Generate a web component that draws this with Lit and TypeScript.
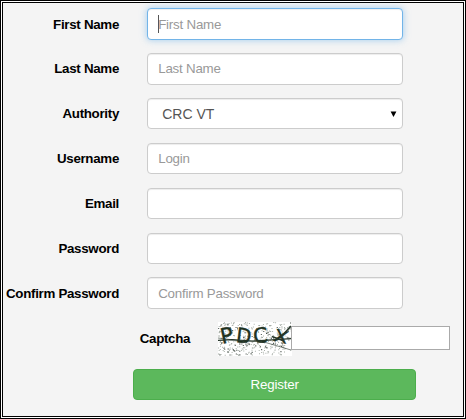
import { LitElement, html, svg, css } from "lit";
import { customElement, property } from "lit/decorators.js";
import { classMap } from "lit/directives/class-map.js";

interface Field {
  label: string;
  placeholder?: string;
  value?: string;
  focused?: boolean;
}

const FIELDS: Field[] = [
  { label: "First Name", placeholder: "First Name", focused: true },
  { label: "Last Name", placeholder: "Last Name" },
  { label: "Authority", value: "CRC VT" },
  { label: "Username", placeholder: "Login" },
  { label: "Email" },
  { label: "Password" },
  { label: "Confirm Password", placeholder: "Confirm Password" },
];

@customElement("captcha-image")
class CaptchaImage extends LitElement {
  static styles = css`
    :host { display: block; width: 74px; height: 34px; flex: none; }
    svg { display: block; }
    .letter { font: 20px "DejaVu Sans", sans-serif; fill: #20321f; stroke: #20321f; stroke-width: 0.4; }
    .line { fill: none; stroke: #26362a; }
  `;

  // Repeatable speckle, so the noise is the same on every render.
  private speckle(count: number, seed: number, size: number) {
    let s = seed;
    const next = () => (s = (s * 16807) % 2147483647) / 2147483647;
    next();
    let d = "";
    for (let i = 0; i < count; i++) {
      d += `M${(next() * 73).toFixed(1)} ${(next() * 33).toFixed(1)}h${size}v${size}h-${size}z`;
    }
    return d;
  }

  render() {
    return html`<svg width="74" height="34" viewBox="0 0 74 34">
      <rect width="74" height="34" fill="#fff"></rect>
      ${svg`<path d=${this.speckle(330, 9137, 1)} fill="#6f7b70" opacity=".6"></path>
      <path d=${this.speckle(80, 4421, 1.1)} fill="#253129" opacity=".8"></path>`}
      <text class="letter" transform="translate(4 22) rotate(-12) scale(1.06)">P</text>
      <text class="letter" transform="translate(17.4 20) rotate(7) scale(.98 1.02)">D</text>
      <text class="letter" transform="translate(35.8 21.2) rotate(-5) scale(1.04)">C</text>
      <text class="letter" transform="translate(54.5 18.6) rotate(14) scale(1.05 .85)">X</text>
      <path class="line" stroke-width="1.6" d="M54 14.5L66 19M62 16L73 4"></path>
      <path class="line" stroke-width="1.2" d="M0 18.4L14 17.6L34 19L46 18.4L73 16.6"></path>
      <path class="line" stroke-width=".8" d="M0 16L20 18.5L46 20L73 28" opacity=".75"></path>
    </svg>`;
  }
}

@customElement("form-row")
class FormRow extends LitElement {
  @property({ attribute: false }) field!: Field;

  static styles = css`
    :host { display: flex; align-items: center; height: 31.5px; }
    .label { width: 116px; margin-right: 27.6px; text-align: right; font-weight: bold; letter-spacing: -0.3px; color: #000; white-space: nowrap; flex: none; }
    .control {
      box-sizing: border-box; width: 256.4px; height: 100%; padding: 0 10.6px;
      display: flex; align-items: center; background: #fff; color: #999; letter-spacing: -0.22px;
      border: 1px solid #ccc; border-radius: 4px;
      box-shadow: inset 0 1px 1px rgba(0, 0, 0, 0.075);
    }
    .focused {
      border-color: #72b4e8;
      box-shadow: inset 0 1px 1px rgba(0, 0, 0, 0.075), 0 0 7px rgba(102, 175, 233, 0.6);
    }
    .select { font-size: 14px; letter-spacing: 0; color: #555; padding: 0 5px 0 14.6px; justify-content: space-between; }
    .caret { width: 1px; height: 18px; background: #555; margin-right: -1px; }
  `;

  render() {
    const f = this.field;
    return html`<div class="label">${f.label}</div>
      <div class=${classMap({ control: true, focused: !!f.focused, select: !!f.value })}>
        ${f.focused ? html`<span class="caret"></span>` : ""}
        <span>${f.value ?? f.placeholder ?? ""}</span>
        ${f.value
          ? html`<svg width="7" height="6" viewBox="0 0 7 6"><path d="M.6 .5H6.4L3.5 6z" fill="#000"></path></svg>`
          : ""}
      </div>`;
  }
}

@customElement("app-root")
class AppRoot extends LitElement {
  static styles = css`
    :host {
      display: block; box-sizing: border-box; width: 466px; height: 419px;
      border: 1px solid #000; background: #fff; padding: 1px;
      font: 13.33px "Liberation Sans", Arial, sans-serif;
    }
    .panel { box-sizing: border-box; height: 100%; border: 1px solid #000; background: #f4f4f4; padding-top: 5.3px; }
    .fields { display: flex; flex-direction: column; gap: 13.35px; }
    .captcha { display: flex; align-items: center; height: 34px; margin: 12.8px 0 0 136.7px; }
    .captcha-label { width: 78.3px; margin-bottom: 1px; font-weight: bold; letter-spacing: -0.3px; color: #000; flex: none; }
    .captcha-input { box-sizing: border-box; width: 159px; height: 24px; margin: 0 0 2px -1px; border: 1px solid #aaa; background: #fff; }
    .register {
      display: flex; align-items: center; justify-content: center; box-sizing: border-box;
      width: 283.4px; height: 31px; margin: 13px 0 0 130px; padding: 0;
      font: inherit; letter-spacing: -0.15px; color: #fff; background: #5cb85c; border: 1px solid #4cae4c; border-radius: 4px;
    }
  `;

  render() {
    return html`<div class="panel">
      <div class="fields">${FIELDS.map((f) => html`<form-row .field=${f}></form-row>`)}</div>
      <div class="captcha">
        <div class="captcha-label">Captcha</div>
        <captcha-image></captcha-image>
        <div class="captcha-input"></div>
      </div>
      <button class="register">Register</button>
    </div>`;
  }
}
